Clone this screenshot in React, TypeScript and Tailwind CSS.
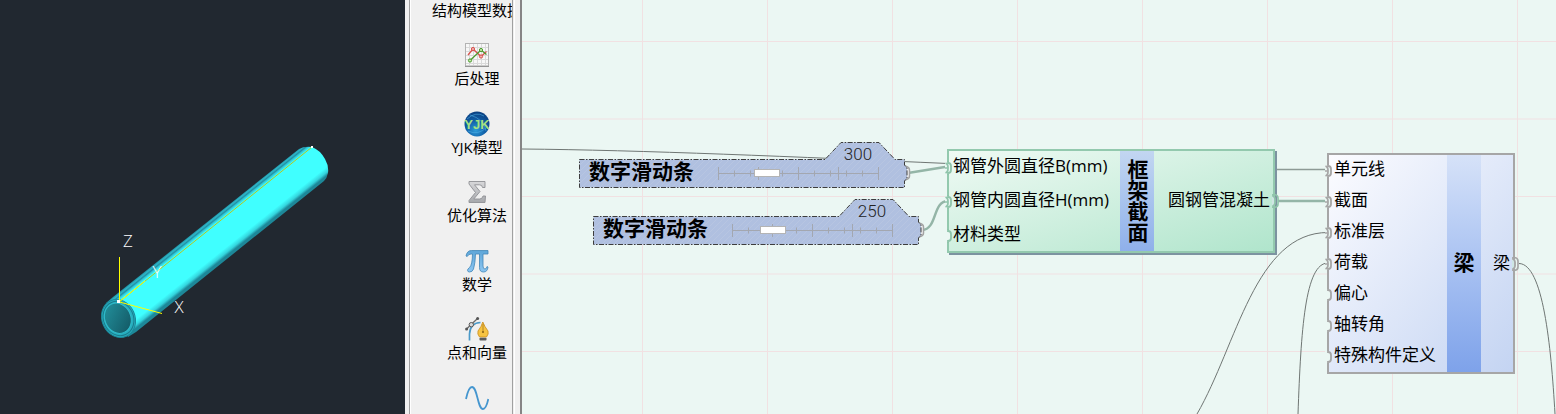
import { useState } from "react";
import type { ReactNode } from "react";

const FONT = "font-['Open_Sans','Noto_Sans_CJK_SC',sans-serif]";

/* ---------- 3D viewport ---------- */

function Viewport() {
  return (
    <section className="h-full w-[405px] shrink-0 overflow-hidden bg-[#212830]">
      <svg width="405" height="414" viewBox="0 0 405 414">
        <defs>
          <linearGradient id="tube" gradientUnits="userSpaceOnUse" x1="206" y1="223" x2="230" y2="253">
            <stop offset="0" stopColor="#2196a8" />
            <stop offset="0.04" stopColor="#2fb6c8" />
            <stop offset="0.08" stopColor="#2190a2" />
            <stop offset="0.11" stopColor="#2fc4d4" />
            <stop offset="0.17" stopColor="#40ffff" />
            <stop offset="0.82" stopColor="#40ffff" />
            <stop offset="0.93" stopColor="#34d4dd" />
            <stop offset="1" stopColor="#1d8899" />
          </linearGradient>
          <linearGradient id="bore" x1="0" y1="0" x2="0.7" y2="1">
            <stop offset="0" stopColor="#23939f" />
            <stop offset="1" stopColor="#145c68" />
          </linearGradient>
        </defs>
        <path
          d="M106 303 L113 297 L299 149 Q304 146 312 147 Q320 150 325 159 Q329 166 328 173 Q327 178 324 181 L136 332 L128 337 Z"
          fill="url(#tube)"
        />
        <g transform="rotate(-24 118.5 318.5)">
          <ellipse cx="118.5" cy="318.5" rx="16.5" ry="19.5" fill="#27aebf" stroke="#1d8798" />
          <ellipse cx="118.5" cy="318.5" rx="15" ry="17.5" fill="none" stroke="#1a7c8c" />
          <ellipse cx="118" cy="318" rx="13" ry="15.5" fill="url(#bore)" stroke="#30bccb" />
        </g>
        <path d="M119 302 L312 147" stroke="#b9c81a" fill="none" />
        <path d="M119 302 L145 281" stroke="#ffff00" fill="none" />
        <path d="M119.5 257 V302 L162 313.5" stroke="#ffff00" fill="none" />
        <rect x="117" y="300" width="3" height="3" fill="#fff" />
        <rect x="311" y="146" width="2" height="2" fill="#fff" />
        <g className="font-['Open_Sans',sans-serif] text-[17px] font-light" fill="#fff" textAnchor="middle">
          <text x="128" y="247">Z</text>
          <text x="157" y="278">Y</text>
          <text x="179" y="313">X</text>
        </g>
      </svg>
    </section>
  );
}

/* ---------- palette icons ---------- */

function ChartIcon() {
  return (
    <svg width="24" height="24" viewBox="0 0 24 24" fill="none">
      <rect x="0.5" y="0.5" width="23" height="22.5" fill="#f7f7f7" stroke="#b3b3b3" />
      <path d="M0 23.4 H24" stroke="#8f8f8f" />
      <path d="M4.5 1 V22 M8.5 1 V22 M12.5 1 V22 M16.5 1 V22 M20.5 1 V22 M1 4.5 H23 M1 8.5 H23 M1 12.5 H23 M1 16.5 H23 M1 20.5 H23" stroke="#dadada" />
      <path d="M3 12 L8 6 L16 13.5 L21.5 8.5" stroke="#d9534f" strokeWidth="1.3" />
      <path d="M5 17.5 L16 7 L21.5 11.5" stroke="#4a9a2c" strokeWidth="1.3" />
      <circle cx="8" cy="6" r="1.6" fill="#f1b0ae" stroke="#d9534f" />
      <circle cx="16" cy="13.5" r="1.6" fill="#f1b0ae" stroke="#d9534f" />
      <circle cx="5" cy="17.5" r="1.6" fill="#c3e6a8" stroke="#4a9a2c" />
      <circle cx="16" cy="7" r="1.6" fill="#c3e6a8" stroke="#4a9a2c" />
    </svg>
  );
}

function GlobeIcon() {
  return (
    <svg width="26" height="26" viewBox="0 0 26 26">
      <defs>
        <radialGradient id="globe" cx="0.45" cy="0.75" r="0.75">
          <stop offset="0" stopColor="#2d9bd8" />
          <stop offset="0.5" stopColor="#1160a8" />
          <stop offset="1" stopColor="#0a3f80" />
        </radialGradient>
      </defs>
      <circle cx="13" cy="13" r="12.5" fill="url(#globe)" />
      <path d="M3 8 Q12 0 20 5 M6 4 Q20 8 22 20 M4 20 Q14 25 23 16" stroke="#4fb0e6" strokeWidth="0.8" fill="none" opacity="0.7" />
      <text x="13" y="18" textAnchor="middle" className="font-['Liberation_Sans',sans-serif] text-[13px] font-bold" fill="#a4e283">
        YJK
      </text>
    </svg>
  );
}

function SigmaIcon() {
  return (
    <svg width="24" height="24" viewBox="0 0 24 24">
      <defs>
        <linearGradient id="sigma" x1="0" y1="0" x2="0" y2="1">
          <stop offset="0" stopColor="#d8d8da" />
          <stop offset="1" stopColor="#a6a8ac" />
        </linearGradient>
      </defs>
      <path
        d="M4 1.5 H20 V7.5 H17.5 Q17.2 4.8 14.5 4.8 H9.5 L15 11.5 L8.8 19 H14.5 Q17.5 19 18 16 H20.5 L20 22.5 H4 V20.5 L10.5 12.5 L4 4 Z"
        fill="url(#sigma)"
        stroke="#8e9094"
        strokeWidth="0.9"
      />
    </svg>
  );
}

function PiIcon() {
  return (
    <svg width="24" height="24" viewBox="0 0 24 24">
      <defs>
        <linearGradient id="pi" x1="0" y1="0" x2="0" y2="1">
          <stop offset="0" stopColor="#5ea6d8" />
          <stop offset="1" stopColor="#8cc6f2" />
        </linearGradient>
      </defs>
      <path
        d="M1 7 Q2 1.5 6.5 1.5 H23 V5 H18 V17 Q18 20 20 20 Q21.5 20 22 17.5 L23 18 Q22.5 23 18.5 23 Q14.5 23 14.5 18.5 V5 H10.5 Q10.3 14 8.5 20 Q7.5 23 4.5 23 Q2.5 23 2.5 21.3 Q2.5 20 4.5 18.5 Q7.3 16 7.5 5 H6 Q3.5 5 2.2 7.5 Z"
        fill="url(#pi)"
        stroke="#4186b8"
        strokeWidth="0.8"
      />
    </svg>
  );
}

function PenIcon() {
  return (
    <svg width="24" height="24" viewBox="0 0 24 24" fill="none">
      <path d="M4.5 23.5 V17 Q5 6 15.5 5.5" stroke="#4b9ac9" strokeWidth="1.7" />
      <path d="M1 12.5 L13 1" stroke="#6b6b6b" strokeWidth="1.3" />
      <circle cx="1.6" cy="12" r="1.5" fill="#555" />
      <circle cx="12.6" cy="1.5" r="1.5" fill="#555" />
      <circle cx="6.3" cy="7.7" r="2.2" fill="#d9d9d9" stroke="#555" />
      <path d="M17.8 5 Q19.5 9.5 23 14 Q24 17 21.5 20 H14.5 Q12 17 13 14 Q16.5 9.5 17.8 5 Z" fill="#f6c342" stroke="#c98a1b" strokeWidth="0.8" />
      <path d="M18 7 V14.5" stroke="#a87a20" strokeWidth="0.8" />
      <circle cx="18" cy="15" r="1.1" fill="#8d6416" />
      <rect x="14.5" y="20.8" width="7" height="2.8" rx="0.8" fill="#5c5c5c" />
    </svg>
  );
}

function WaveIcon() {
  return (
    <svg width="24" height="24" viewBox="0 0 24 24" fill="none">
      <path d="M1 13 C3 3.5 5 1 7 1 C12.5 1 12.5 23 18 23 C20.500 23 22 19 23.300 13" stroke="#4596cf" strokeWidth="1.8" />
    </svg>
  );
}

const CATEGORIES: { label: string; icon: ReactNode }[] = [
  { label: "结构模型数据", icon: null },
  { label: "后处理", icon: <ChartIcon /> },
  { label: "YJK模型", icon: <GlobeIcon /> },
  { label: "优化算法", icon: <SigmaIcon /> },
  { label: "数学", icon: <PiIcon /> },
  { label: "点和向量", icon: <PenIcon /> },
  { label: "", icon: <WaveIcon /> },
];

function Palette() {
  return (
    <aside className="flex h-full w-[117px] shrink-0 border-r-2 border-r-[#858585] bg-[#f0f0f0] pl-1">
      <div className="w-[104px] overflow-hidden border-x border-[#a0a0a0]">
        <div className="h-full overflow-hidden border-l border-white">
          <ul className="-mt-[49px] grid h-[480px] w-[132px] grid-rows-7">
            {CATEGORIES.map((c, i) => (
              <li key={i} className="flex">
                <button type="button" className="flex w-full flex-col items-center justify-end gap-px">
                  <span className="flex h-6 items-center">{c.icon}</span>
                  <span className="h-5 text-[15px] leading-5 whitespace-nowrap text-black">{c.label}</span>
                </button>
              </li>
            ))}
          </ul>
        </div>
      </div>
      <div className="ml-px w-px bg-white" />
    </aside>
  );
}

/* ---------- node graph ---------- */

function Port({ side, tone, linked = true }: { side: "left" | "right"; tone: string; linked?: boolean }) {
  if (side === "left") {
    return (
      <svg width="8" height="18" viewBox="0 0 8 18" fill="none" className="absolute top-1/2 -left-1 -translate-y-1/2">
        <path d="M0 3 H3 L6 6 V12 L3 15 H0 Z" fill="#ebf7f3" />
        <path d="M3 2 V4 Q6 4 6 7 V11 Q6 14 3 14 V16" stroke={tone} strokeWidth="1.8" />
        {linked && <path d="M0.5 4 Q3 5 3 8 V10 Q3 13 0.5 14 M0 9 H3" stroke={tone} strokeWidth="1.7" />}
      </svg>
    );
  }
  return (
    <svg width="8" height="18" viewBox="0 0 8 18" fill="none" className="absolute top-1/2 -right-[7px] -translate-y-1/2">
      <path d="M0 3 L3 5 V13 L0 15 Z" fill="#cfe6e4" />
      <path d="M1 2 V4 Q3 5 3 7 V11 Q3 13 1 14 V16" stroke={tone} strokeWidth="1.8" />
      <path d="M2.500 2.500 Q6 3 6 6 V12 Q6 15 2.500 15.500" stroke={tone} strokeWidth="1.7" />
    </svg>
  );
}

const MINOR = [0, 16, 32, 48, 64, 80, 96, 112, 128, 144, 160];
const MAJOR = [0, 40, 80, 120, 160];

function SliderNode({ id, initial, place }: { id: string; initial: number; place: string }) {
  const [value, setValue] = useState(initial);
  return (
    <div className={`absolute h-[46px] w-[326px] ${place}`}>
      <svg width="332" height="46" viewBox="0 0 332 46" fill="none" className="absolute top-0 left-0">
        <defs>
          <pattern id={`hatch-${id}`} width="6" height="6" patternUnits="userSpaceOnUse">
            <rect width="6" height="6" fill="#b0c0e0" />
            <path d="M0 6 L6 0" stroke="#b9c6e1" strokeWidth="0.8" />
          </pattern>
        </defs>
        <path d="M326 24 Q330.500 25 330.500 28 V34 Q330.500 37 326 38" stroke="#a2a2a2" strokeWidth="1.5" fill="#f2f2f2" />
        <path
          d="M0.5 17.5 H246 L262 0.5 H300 L316 17.5 H325.5 V23 L328 26 V36 L325.5 39 V45.5 H0.5 Z"
          fill={`url(#hatch-${id})`}
          stroke="#3d3d3d"
          strokeDasharray="5 1.5 1.5 1.5"
        />
      </svg>
      <output htmlFor={id} className="absolute top-0 left-[261px] w-9 text-center font-['Roboto',sans-serif] text-[17px] leading-6 font-light text-[#222]">
        {value}
      </output>
      <div className="relative flex h-full items-center gap-3 pt-[15px] pl-[10px]">
        <label htmlFor={id} className="pb-1 text-[21px] leading-6 font-bold whitespace-nowrap text-black">
          数字滑动条
        </label>
        <div className="relative flex h-4 w-[186px] items-center">
          <svg width="186" height="16" viewBox="0 0 186 16" className="absolute inset-0">
            <g stroke="#a3a7b0">
              <path d="M13 8.5 H173" />
              {MINOR.map((x) => (
                <path key={x} d={`M${x + 12.5} 5.5 v6`} />
              ))}
              {MAJOR.map((x) => (
                <path key={x} d={`M${x + 12.5} 2 v13`} />
              ))}
            </g>
          </svg>
          <input
            id={id}
            type="range"
            min={0}
            max={1000}
            value={value}
            onChange={(e) => setValue(Number(e.target.value))}
            className="relative m-0 h-4 w-full appearance-none bg-transparent [&::-webkit-slider-thumb]:h-2 [&::-webkit-slider-thumb]:w-[26px] [&::-webkit-slider-thumb]:appearance-none [&::-webkit-slider-thumb]:border [&::-webkit-slider-thumb]:border-[#b4b4b4] [&::-webkit-slider-thumb]:bg-white"
          />
        </div>
      </div>
    </div>
  );
}

function SectionNode() {
  const inputs = [
    { name: "钢管外圆直径B(mm)", linked: true },
    { name: "钢管内圆直径H(mm)", linked: true },
    { name: "材料类型", linked: false },
  ];
  return (
    <article className="absolute top-[149px] left-[425px] flex h-[104px] w-[328px] border-2 border-[#93c9ae] bg-linear-to-br from-[#effaf4] to-[#b0e5cc] shadow-[2px_2px_0_#7c93a0]">
      <ul className="flex flex-1 flex-col">
        {inputs.map((p) => (
          <li key={p.name} className="relative h-[34px] shrink-0 pl-1 text-[17px] leading-[30px] whitespace-nowrap text-black">
            <Port side="left" tone="#8fc4aa" linked={p.linked} />
            {p.name}
          </li>
        ))}
      </ul>
      <h2 className="flex w-[34px] items-center justify-center bg-linear-to-b from-[#c2d6f1] to-[#8fb0ea] text-[21px] leading-6 font-bold text-black [writing-mode:vertical-rl]">
        框架截面
      </h2>
      <div className="relative flex w-[119px] items-center justify-end pr-[3px] pb-[2px] text-[17px] leading-6 whitespace-nowrap text-black">
        圆钢管混凝土
        <Port side="right" tone="#8fc4aa" />
      </div>
    </article>
  );
}

function BeamNode() {
  const inputs = [
    { name: "单元线", linked: true },
    { name: "截面", linked: true },
    { name: "标准层", linked: true },
    { name: "荷载", linked: true },
    { name: "偏心", linked: false },
    { name: "轴转角", linked: false },
    { name: "特殊构件定义", linked: false },
  ];
  return (
    <article className="absolute top-[153px] left-[805px] flex h-[221px] w-[188px] border-2 border-[#a6a6a6] bg-linear-to-br from-[#fcfcff] to-[#c4d4f2]">
      <ul className="flex flex-1 flex-col">
        {inputs.map((p) => (
          <li key={p.name} className="relative flex flex-1 items-center pb-[3px] pl-[5px] text-[17px] leading-6 whitespace-nowrap text-black">
            <Port side="left" tone="#a6a6a6" linked={p.linked} />
            {p.name}
          </li>
        ))}
      </ul>
      <h2 className="flex w-[34px] items-center justify-center bg-linear-to-b from-[#d6e2f8] to-[#7ea2ea] pb-1 text-[21px] leading-6 font-bold text-black">
        梁
      </h2>
      <div className="relative flex w-8 items-center justify-end pr-[3px] pb-[2px] text-[17px] leading-6 text-black">
        梁
        <Port side="right" tone="#a6a6a6" />
      </div>
    </article>
  );
}

function Wires() {
  return (
    <svg width="100%" height="100%" className="absolute inset-0">
      <defs>
        <pattern id="grid" width="125" height="77.5" x="-5" y="41" patternUnits="userSpaceOnUse">
          <path d="M0.5 0 V78 M0 0.5 H125" stroke="#f1e1e2" fill="none" />
        </pattern>
      </defs>
      <rect width="100%" height="100%" fill="url(#grid)" />
      <g transform="translate(-522 0)" fill="none" stroke="#6f7673">
        <path d="M522 149 C640 150 800 157 948 163.5" />
        <path d="M1275 169.5 H1328" strokeWidth="1.5" stroke="#8d9a95" />
        <path d="M1197 414 C1237 345 1255 232.5 1328 232.5" />
        <path d="M1298 414 C1301 330 1305 263 1328 263" />
        <path d="M1519 263.5 C1543 264 1551 345 1555 414" />
        <g strokeWidth="2.4" stroke="#94b5a7">
          <path d="M908 173 L948 166.5" />
          <path d="M922 230 C938 229 932 201 948 201" />
          <path d="M1278 201 H1328" />
        </g>
      </g>
    </svg>
  );
}

export default function App() {
  return (
    <main className={`flex h-screen overflow-hidden ${FONT}`}>
      <Viewport />
      <Palette />
      <section className="relative h-full min-w-0 flex-1 overflow-hidden bg-[#ebf7f3]">
        <Wires />
        <SliderNode id="outer" initial={300} place="top-[142px] left-[57px]" />
        <SliderNode id="inner" initial={250} place="top-[199px] left-[71px]" />
        <SectionNode />
        <BeamNode />
      </section>
    </main>
  );
}
